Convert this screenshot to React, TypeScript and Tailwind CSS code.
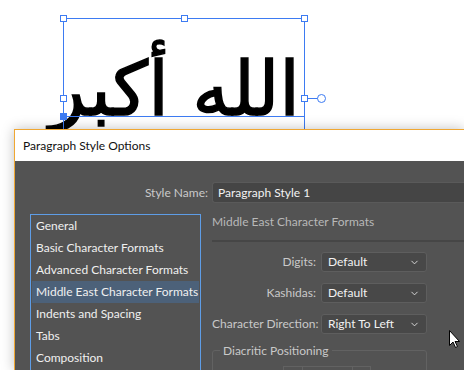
import { ChevronDown } from "lucide-react";

const pages = [
  "General",
  "Basic Character Formats",
  "Advanced Character Formats",
  "Middle East Character Formats",
  "Indents and Spacing",
  "Tabs",
  "Composition",
];

const ui = { fontFamily: 'Lato, "Noto Sans", "Liberation Sans", sans-serif' };

function Handle({ x, y, filled }: { x: number; y: number; filled?: boolean }) {
  return (
    <div
      className={`absolute w-[7px] h-[7px] border border-[#3d7bf2] ${filled ? "bg-[#3d7bf2]" : "bg-white"}`}
      style={{ left: x - 3, top: y - 3 }}
    />
  );
}

function Select({ value }: { value: string }) {
  return (
    <div className="w-[106px] h-[20px] flex items-center justify-between pl-[6px] pr-[6px] bg-[#484848] border border-[#5e5e5e] rounded-[3px] text-[#f2f2f2]">
      <span>{value}</span>
      <ChevronDown size={11} strokeWidth={2} className="text-[#e0e0e0]" />
    </div>
  );
}

export default function App() {
  return (
    <div className="w-[464px] h-[370px] overflow-hidden bg-white relative text-[12px]" style={ui}>
      {/* canvas with the selected text frame */}
      <div className="relative h-[129px] overflow-hidden">
        <div
          dir="rtl"
          className="absolute left-[62px] top-[14px] w-[238px] text-right text-[75px] leading-[150px] text-black whitespace-nowrap origin-right scale-x-[0.99] [-webkit-text-stroke:1.5px_black]"
          style={{ fontFamily: '"DejaVu Sans", sans-serif' }}
        >
          الله أكبر
        </div>
        <div className="absolute left-[63px] top-[18px] w-[242px] h-[200px] border border-[#3d7bf2]" />
        <div className="absolute left-[63px] top-[116px] w-[242px] h-px bg-[#3d7bf2]" />
        <div className="absolute left-[305px] top-[98px] w-[13px] h-px bg-[#3d7bf2]" />
        <div className="absolute left-[317px] top-[94px] w-[9px] h-[9px] rounded-full border border-[#3d7bf2] bg-white" />
        <Handle x={63} y={18} />
        <Handle x={184} y={18} />
        <Handle x={304} y={18} />
        <Handle x={63} y={98} />
        <Handle x={304} y={98} />
        <Handle x={63} y={116} filled />
      </div>

      {/* dialog */}
      <div className="relative z-10 ml-[14px] h-[241px] border-t border-l border-[#f0a732] shadow-[0_0_12px_rgba(0,0,0,0.25)] flex flex-col">
        <div className="shrink-0 h-[31px] bg-white pl-[8px] flex items-center text-[#111] text-[12px]">Paragraph Style Options</div>
        <div className="flex-1 bg-[#535353] pt-[21px]">
          <div className="flex items-center h-[21px]">
            <div className="w-[197px] pr-[4px] text-right text-[#c9c9c9]">Style Name:</div>
            <div className="flex-1 h-[21px] bg-[#454545] border border-[#5a5a5a] border-r-0 rounded-l-[3px] pl-[5px] flex items-center text-[#f2f2f2]">
              Paragraph Style 1
            </div>
          </div>

          <div className="flex mt-[11px] pl-[15px]">
            <div className="shrink-0 w-[171px] h-[200px] border border-[#5e9de6] px-[1px] text-[#f0f0f0]">
              {pages.map((p) => (
                <div key={p} className={`h-[22px] flex items-center pl-[4px] whitespace-nowrap ${p.startsWith("Middle") ? "bg-[#4c6179]" : ""}`}>
                  {p}
                </div>
              ))}
            </div>

            <div className="flex-1 ml-[11px]">
              <div className="h-[16px] flex items-center text-[#b8b8b8]">Middle East Character Formats</div>
              <div className="mt-[10px] h-[2px] bg-[#464646]" />
              <div className="mt-[10px] flex flex-col gap-[11px] text-[#c9c9c9]">
                {[
                  ["Digits:", "Default"],
                  ["Kashidas:", "Default"],
                  ["Character Direction:", "Right To Left"],
                ].map(([label, value]) => (
                  <div key={label} className="flex items-center">
                    <div className="w-[105px] pr-[1px] text-right whitespace-nowrap">{label}</div>
                    <div className="ml-[4px]">
                      <Select value={value} />
                    </div>
                  </div>
                ))}
              </div>
              <div className="relative mt-[16px] w-[215px] h-[40px] border border-[#626262] rounded-[3px]">
                <div className="absolute left-[7px] -top-[9px] px-[3px] bg-[#535353] text-[#c9c9c9]">Diacritic Positioning</div>
                <div className="absolute left-[70px] top-[15px] w-[88px] h-[20px] border border-[#626262] flex">
                  <div className="w-[19px] border-r border-[#626262]" />
                  <div className="w-[50px] border-r border-[#626262]" />
                </div>
              </div>
            </div>
          </div>
        </div>
      </div>

      {/* mouse pointer */}
      <svg className="absolute left-[449px] top-[330px] z-20" width="12" height="19" viewBox="0 0 12 19">
        <path d="M0.5 0.5 L0.5 15.5 L4 12 L6.5 17.5 L8.5 16.5 L6 11.5 L10.5 11.5 Z" fill="white" stroke="black" strokeWidth="1" />
      </svg>
    </div>
  );
}
